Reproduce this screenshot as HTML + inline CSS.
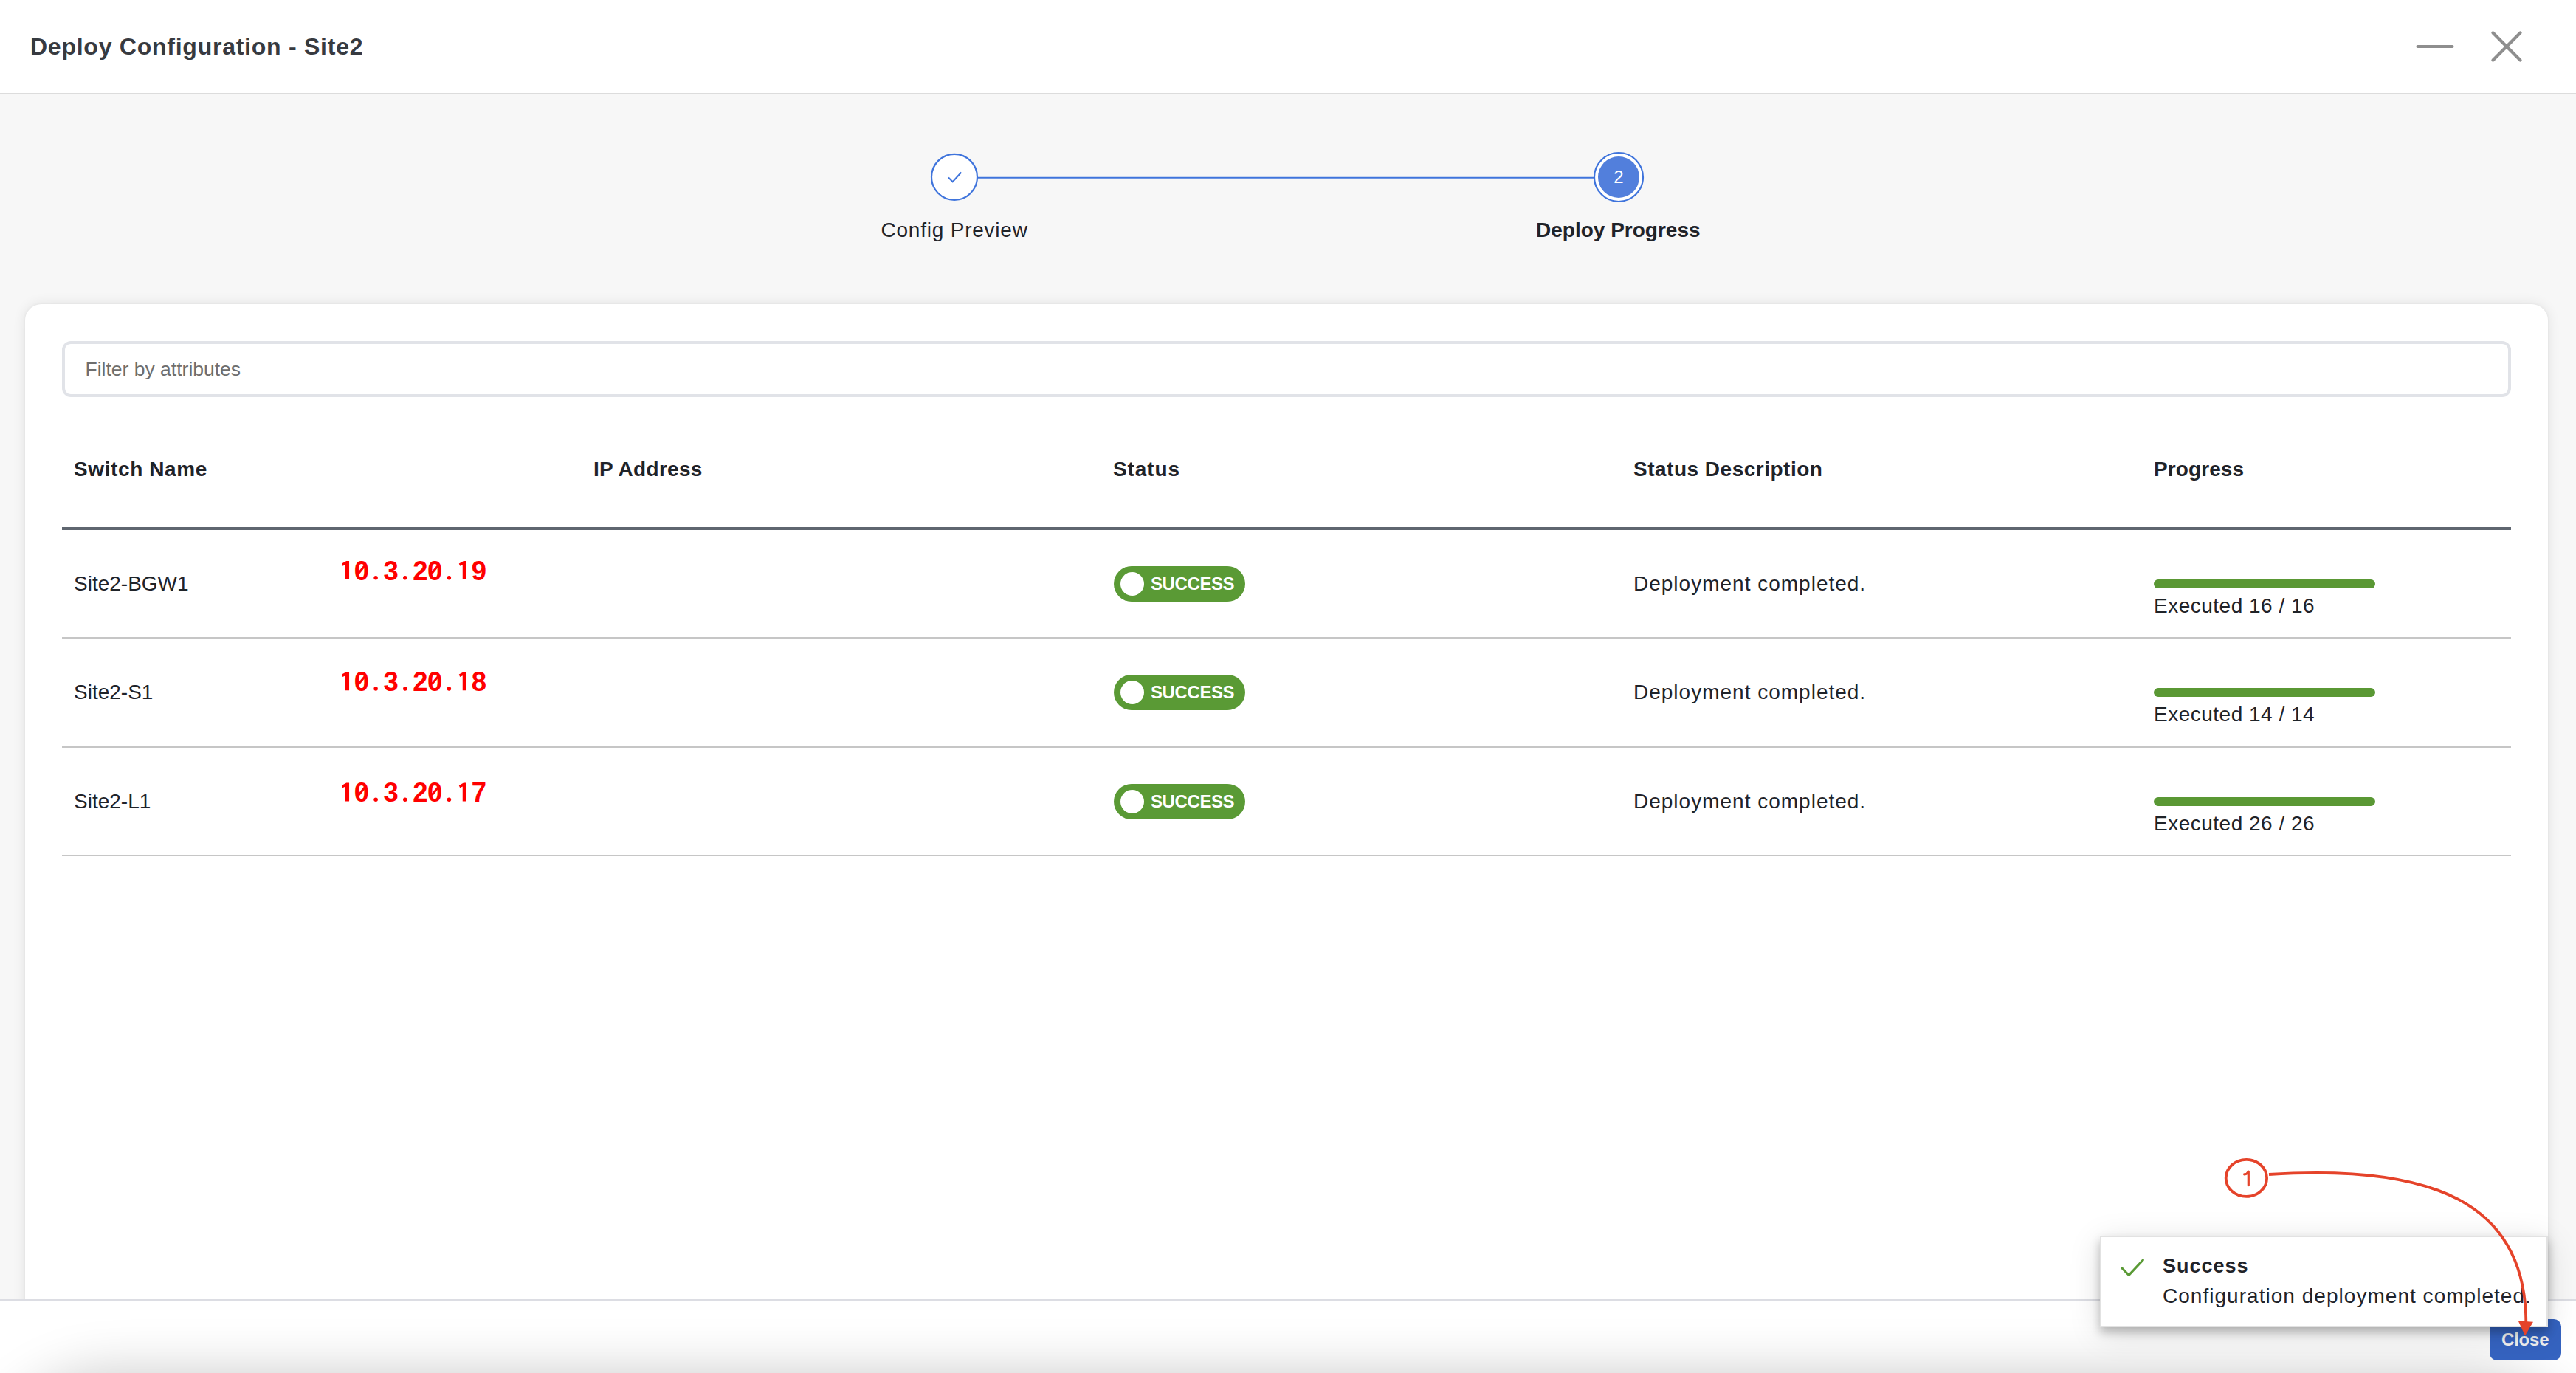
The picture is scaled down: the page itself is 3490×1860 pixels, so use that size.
<!DOCTYPE html>
<html><head><meta charset="utf-8">
<style>
*{margin:0;padding:0;box-sizing:border-box}
html,body{width:3490px;height:1860px;overflow:hidden;background:#f7f7f7;font-family:"Liberation Sans",sans-serif;color:#1f2329}
.a{position:absolute;white-space:nowrap;line-height:1}
#hdr{position:absolute;left:0;top:0;width:3490px;height:128px;background:#fff;border-bottom:2px solid #dcdcdc}
#card{position:absolute;left:34px;top:412px;width:3418px;height:1500px;background:#fff;border-radius:22px;box-shadow:0 0 4px rgba(0,0,0,0.05),0 0 18px rgba(0,0,0,0.09)}
#filter{position:absolute;left:84px;top:462px;width:3318px;height:76px;border:4px solid #e1e3e8;border-radius:12px;background:#fff}
.th{font-weight:700;font-size:28px;color:#1f2329;letter-spacing:0.3px}
.td{font-size:28px;color:#1f2329}
.hl{position:absolute;left:84px;width:3318px;height:2px;background:#c6c6c6}
.badge{position:absolute;left:1509px;width:178px;height:48px;border-radius:24px;background:#5a9a35}
.badge i{position:absolute;left:9px;top:8px;width:32px;height:32px;border-radius:50%;background:#fff}
.badge b{position:absolute;left:50px;top:12px;font-size:24px;font-weight:700;color:#fff;line-height:1;white-space:nowrap;letter-spacing:-0.4px}
.bar{position:absolute;left:2918px;width:300px;height:12px;border-radius:6px;background:#5a9834}
#footer{position:absolute;left:0;top:1760px;width:3490px;height:100px;border-top:2px solid #dcdde3;background:#fff;overflow:hidden}
#fshadow{position:absolute;left:-10px;top:104px;width:3515px;height:200px;border-radius:160px 160px 0 0;background:#ddd;box-shadow:0 0 75px 4px rgba(0,0,0,0.22)}
#toast{position:absolute;left:2845px;top:1674px;width:607px;height:124px;background:#fff;border:2px solid #e2e2e2;box-shadow:0 7px 12px rgba(0,0,0,0.24),0 8px 44px rgba(0,0,0,0.13)}
#closebtn{position:absolute;left:3373px;top:1787px;width:97px;height:56px;border-radius:10px;background:#3563c0}
</style></head><body>
<div id="hdr"></div>
<div class="a" style="left:41px;top:47px;font-size:32px;font-weight:700;color:#373a40;letter-spacing:0.75px">Deploy Configuration - Site2</div>
<svg class="a" style="left:0;top:0" width="3490" height="128">
  <line x1="3275.5" y1="63" x2="3322.5" y2="63" stroke="#8e8e8e" stroke-width="4" stroke-linecap="round"/>
  <line x1="3377.5" y1="44.5" x2="3414.5" y2="81.5" stroke="#8e8e8e" stroke-width="4.3" stroke-linecap="round"/>
  <line x1="3414.5" y1="44.5" x2="3377.5" y2="81.5" stroke="#8e8e8e" stroke-width="4.3" stroke-linecap="round"/>
</svg>

<!-- stepper -->
<svg class="a" style="left:0;top:180px" width="3490" height="120">
  <line x1="1325" y1="60.7" x2="2160" y2="60.7" stroke="#3f74dc" stroke-width="2"/>
  <circle cx="1293" cy="59.8" r="31" fill="#fff" stroke="#3f74dc" stroke-width="2.2"/>
  <polyline points="1285,60.5 1290.7,66.2 1302.3,53.5" fill="none" stroke="#3f74dc" stroke-width="2"/>
  <circle cx="2193" cy="60" r="33" fill="#fff" stroke="#3f74dc" stroke-width="2.2"/>
  <circle cx="2193" cy="60" r="28" fill="#527fdc"/>
  <text x="2193" y="68" font-family="Liberation Sans" font-size="24" fill="#fff" text-anchor="middle">2</text>
</svg>
<div class="a" style="left:1193.5px;top:298px;font-size:28px;letter-spacing:0.78px">Config Preview</div>
<div class="a" style="left:2081px;top:298px;font-size:28px;font-weight:700">Deploy Progress</div>

<div id="card"></div>
<div id="filter"></div>
<div class="a" style="left:115.5px;top:486.6px;font-size:26.5px;color:#6e6e6e">Filter by attributes</div>

<!-- table header -->
<div class="a th" style="left:100px;top:622px;letter-spacing:0.6px">Switch Name</div>
<div class="a th" style="left:804px;top:622px">IP Address</div>
<div class="a th" style="left:1508px;top:622px;letter-spacing:0.9px">Status</div>
<div class="a th" style="left:2213px;top:622px;letter-spacing:0.5px">Status Description</div>
<div class="a th" style="left:2918px;top:622px;letter-spacing:0.1px">Progress</div>
<div class="hl" style="top:714px;height:4px;background:#5f6670"></div>

<!-- rows -->
<div class="a td" style="left:100px;top:777px">Site2-BGW1</div>
<div class="badge" style="top:767px"><i></i><b>SUCCESS</b></div>
<div class="a td" style="left:2213px;top:777px;letter-spacing:1px">Deployment completed.</div>
<div class="bar" style="top:785px"></div>
<div class="a td" style="left:2918px;top:807px;letter-spacing:0.5px">Executed 16 / 16</div>
<div class="hl" style="top:863px"></div>

<div class="a td" style="left:100px;top:924px">Site2-S1</div>
<div class="badge" style="top:914px"><i></i><b>SUCCESS</b></div>
<div class="a td" style="left:2213px;top:924px;letter-spacing:1px">Deployment completed.</div>
<div class="bar" style="top:932px"></div>
<div class="a td" style="left:2918px;top:954px;letter-spacing:0.5px">Executed 14 / 14</div>
<div class="hl" style="top:1011px"></div>

<div class="a td" style="left:100px;top:1072px">Site2-L1</div>
<div class="badge" style="top:1062px"><i></i><b>SUCCESS</b></div>
<div class="a td" style="left:2213px;top:1072px;letter-spacing:1px">Deployment completed.</div>
<div class="bar" style="top:1080px"></div>
<div class="a td" style="left:2918px;top:1102px;letter-spacing:0.5px">Executed 26 / 26</div>
<div class="hl" style="top:1158px"></div>

<svg class="a" style="left:0;top:0" width="3490" height="1860">
<g font-family="Liberation Sans" font-weight="700" font-size="36.5" fill="#ff0000" text-anchor="middle">
<text x="490.00" y="785.5">0</text>
<text x="529.70" y="785.5">3</text>
<text x="569.40" y="785.5">2</text>
<text x="589.25" y="785.5">0</text>
<text x="648.80" y="785.5">9</text>
<text x="490.00" y="935.7">0</text>
<text x="529.70" y="935.7">3</text>
<text x="569.40" y="935.7">2</text>
<text x="589.25" y="935.7">0</text>
<text x="648.80" y="935.7">8</text>
<text x="490.00" y="1086">0</text>
<text x="529.70" y="1086">3</text>
<text x="569.40" y="1086">2</text>
<text x="589.25" y="1086">0</text>
<text x="648.80" y="1086">7</text>
<path d="M473.05,760.00 L469.25,760.00 L463.00,763.40 L464.32,766.86 L467.95,765.10 L467.95,785.00 L473.05,785.00Z M631.85,760.00 L628.05,760.00 L621.80,763.40 L623.12,766.86 L626.75,765.10 L626.75,785.00 L631.85,785.00Z M473.05,910.20 L469.25,910.20 L463.00,913.60 L464.32,917.06 L467.95,915.30 L467.95,935.20 L473.05,935.20Z M631.85,910.20 L628.05,910.20 L621.80,913.60 L623.12,917.06 L626.75,915.30 L626.75,935.20 L631.85,935.20Z M473.05,1060.50 L469.25,1060.50 L463.00,1063.90 L464.32,1067.36 L467.95,1065.60 L467.95,1085.50 L473.05,1085.50Z M631.85,1060.50 L628.05,1060.50 L621.80,1063.90 L623.12,1067.36 L626.75,1065.60 L626.75,1085.50 L631.85,1085.50Z"/>
<circle cx="509.10" cy="782.7" r="2.75"/>
<circle cx="548.80" cy="782.7" r="2.75"/>
<circle cx="608.35" cy="782.7" r="2.75"/>
<circle cx="509.10" cy="932.9" r="2.75"/>
<circle cx="548.80" cy="932.9" r="2.75"/>
<circle cx="608.35" cy="932.9" r="2.75"/>
<circle cx="509.10" cy="1083.2" r="2.75"/>
<circle cx="548.80" cy="1083.2" r="2.75"/>
<circle cx="608.35" cy="1083.2" r="2.75"/>
</g><g stroke="#ff0000" stroke-width="3">
<line x1="485.70" y1="776.7" x2="494.00" y2="766.5"/>
<line x1="584.95" y1="776.7" x2="593.25" y2="766.5"/>
<line x1="485.70" y1="926.9" x2="494.00" y2="916.7"/>
<line x1="584.95" y1="926.9" x2="593.25" y2="916.7"/>
<line x1="485.70" y1="1077.2" x2="494.00" y2="1067.0"/>
<line x1="584.95" y1="1077.2" x2="593.25" y2="1067.0"/>
</g></svg>
<div id="footer"><div id="fshadow"></div></div>
<div id="closebtn"></div>
<div class="a" style="left:3389px;top:1803px;font-size:24px;font-weight:700;color:#f0f0f0;letter-spacing:-0.2px">Close</div>

<div id="toast"></div>
<svg class="a" style="left:2845px;top:1674px" width="120" height="124">
  <polyline points="30,44 39.2,53.5 58.3,33" fill="none" stroke="#5a9a35" stroke-width="3.2" stroke-linecap="round" stroke-linejoin="round"/>
</svg>
<div class="a" style="left:2930px;top:1702px;font-size:27px;font-weight:700;letter-spacing:1px">Success</div>
<div class="a" style="left:2930px;top:1742px;font-size:28px;letter-spacing:1.03px">Configuration deployment completed.</div>

<!-- annotation -->
<svg class="a" style="left:0;top:0" width="3490" height="1860">
  <ellipse cx="3043.4" cy="1595.9" rx="27.7" ry="25" fill="none" stroke="#e5432a" stroke-width="3.8"/>
  <path d="M3074,1591 C3295,1577 3422,1628.4 3422.3,1792" fill="none" stroke="#e5432a" stroke-width="3.8"/>
  <polygon points="3411.8,1789.5 3432,1790.8 3421,1809.5" fill="#e5432a"/>
  <path d="M3046.3,1605.6 V1587 C3045.2,1589.8 3043.6,1590.6 3040.6,1590.9" fill="none" stroke="#e5432a" stroke-width="3.2" stroke-linecap="round" stroke-linejoin="round"/>
</svg>
</body></html>
